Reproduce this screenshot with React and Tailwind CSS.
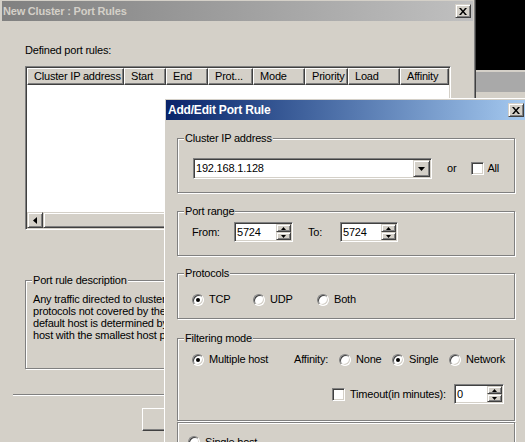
import React from 'react';

const sunken =
  'border border-t-[#808080] border-l-[#808080] border-r-white border-b-white shadow-[inset_1px_1px_0_#404040,inset_-1px_-1px_0_#d4d0c8]';
const raised =
  'border border-t-[#d4d0c8] border-l-[#d4d0c8] border-r-[#404040] border-b-[#404040] shadow-[inset_1px_1px_0_#fff,inset_-1px_-1px_0_#808080]';
const etched = 'border border-[#808080] shadow-[inset_1px_1px_0_#fff,1px_1px_0_#fff]';

const CloseBtn = () => (
  <span className={`w-[16px] h-[14px] bg-[#d4d0c8] flex items-center justify-center ${raised}`}>
    <svg width="8" height="7" viewBox="0 0 8 7">
      <path d="M0 0h2l2 2.5L6 0h2L5 3.5 8 7H6L4 4.5 2 7H0l3-3.5z" fill="#000" />
    </svg>
  </span>
);

const Arrow = ({ dir }) => {
  const d = {
    up: 'M0 3h5L2.5 0z',
    down: 'M0 0h5L2.5 3z',
  }[dir];
  return (
    <svg width="5" height="3" viewBox="0 0 5 3">
      <path d={d} fill="#000" />
    </svg>
  );
};

const Spinner = ({ value, w }) => (
  <div className={`h-[20px] bg-white flex ${sunken} ${w}`}>
    <span className="flex-1 pl-[2px] flex items-center">{value}</span>
    <div className="flex flex-col w-[16px] py-[1px] pr-[1px]">
      <span className={`flex-1 bg-[#d4d0c8] flex items-center justify-center ${raised}`}>
        <Arrow dir="up" />
      </span>
      <span className={`flex-1 bg-[#d4d0c8] flex items-center justify-center ${raised}`}>
        <Arrow dir="down" />
      </span>
    </div>
  </div>
);

const Radio = ({ checked, label, className = '' }) => (
  <div className={`flex items-center gap-[5px] ${className}`}>
    <span className="w-[12px] h-[12px] shrink-0 rounded-full bg-white border border-t-[#808080] border-l-[#808080] border-r-white border-b-white shadow-[inset_1px_1px_0_#404040,inset_-1px_-1px_0_#d4d0c8] flex items-center justify-center">
      {checked && <span className="w-[4px] h-[4px] rounded-full bg-black" />}
    </span>
    <span>{label}</span>
  </div>
);

const Check = () => <span className={`w-[13px] h-[13px] shrink-0 bg-white ${sunken}`} />;

const Group = ({ label, className = '', children }) => (
  <fieldset className={`w-[338px] ${etched} ${className}`}>
    <legend className="ml-[6px] px-[1px] leading-[13px] bg-[#d4d0c8]">{label}</legend>
    {children}
  </fieldset>
);

const columns = [
  ['Cluster IP address', 'w-[97px]'],
  ['Start', 'w-[42px]'],
  ['End', 'w-[42px]'],
  ['Prot...', 'w-[45px]'],
  ['Mode', 'w-[52px]'],
  ['Priority', 'w-[43px]'],
  ['Load', 'w-[52px]'],
  ['Affinity', 'flex-1'],
];

const BackWindow = () => (
  <div className="absolute left-0 top-0 w-[476px] h-[470px] bg-[#d4d0c8] pt-[1px] pl-[2px] border-r border-r-[#404040] shadow-[inset_-1px_0_0_#808080]">
    <div className="h-[20px] mr-[2px] pl-[1px] pr-[2px] flex items-center justify-between bg-linear-to-r from-[#808080] to-[#c0c0c0] text-[#d4d0c8] font-bold text-[11px]">
      <span>New Cluster :  Port Rules</span>
      <CloseBtn />
    </div>

    <div className="pl-[11px]">
      <div className="ml-[12px] mt-[23px] leading-[13px]">Defined port rules:</div>

      <div className={`ml-[12px] mt-[9px] w-[426px] h-[164px] flex flex-col bg-white p-[1px] ${sunken}`}>
        <div className="flex h-[17px] shrink-0 bg-[#d4d0c8]">
          {columns.map(([name, w]) => (
            <div
              key={name}
              className={`${w} h-full pl-[6px] flex items-center whitespace-nowrap overflow-hidden border border-t-white border-l-white border-r-[#404040] border-b-[#404040] shadow-[inset_-1px_-1px_0_#808080]`}
            >
              {name}
            </div>
          ))}
        </div>
        <div className="flex-1 bg-white" />
        <div className="h-[16px] shrink-0 flex bg-[#e9e7e3]">
          <span className={`w-[16px] h-[16px] bg-[#d4d0c8] flex items-center justify-center ${raised}`}>
            <svg width="4" height="7" viewBox="0 0 4 7">
              <path d="M4 0v7L0 3.5z" fill="#000" />
            </svg>
          </span>
          <span className={`flex-1 h-[16px] bg-[#d4d0c8] ${raised}`} />
        </div>
      </div>

      <fieldset className={`ml-[12px] mt-[44px] w-[426px] ${etched} pb-[27px]`}>
        <legend className="ml-[6px] px-[1px] leading-[13px] bg-[#d4d0c8]">Port rule description</legend>
        <div className="pl-[7px] pt-[6px] leading-[12px] whitespace-nowrap">
          <div>Any traffic directed to cluster IP addresses that is not covered by the</div>
          <div>protocols not covered by the port rules is handled by the default host. The</div>
          <div>default host is determined by the host priority settings; it is the</div>
          <div>host with the smallest host priority.</div>
        </div>
      </fieldset>

      <div className="mt-[25px] w-[450px] h-[2px] border-t border-t-[#808080] border-b border-b-white" />

      <div className="mt-[12px] ml-[129px] w-[75px] h-[23px] bg-[#d4d0c8] border border-t-white border-l-white border-r-[#404040] border-b-[#404040] shadow-[inset_-1px_-1px_0_#808080]" />
    </div>
  </div>
);

const FrontDialog = () => (
  <div className="absolute left-[164px] top-[98px] w-[363px] h-[360px] bg-[#d4d0c8] border-t border-l border-white pt-[1px] pl-[1px]">
    <div className="h-[20px] mr-[1px] pl-[2px] pr-[2px] flex items-center justify-between bg-linear-to-r from-[#0a246a] to-[#a6caf0] text-white font-bold text-[12px]">
      <span>Add/Edit Port Rule</span>
      <CloseBtn />
    </div>

    <div className="pl-[11px]">
      <Group label="Cluster IP address" className="mt-[12px]">
        <div className="mt-[13px] pb-[13px] pl-[15px] flex items-center">
          <div className={`w-[239px] h-[21px] bg-white flex items-center ${sunken}`}>
            <span className="flex-1 pl-[2px]">192.168.1.128</span>
            <span className={`w-[17px] h-[17px] mr-[1px] bg-[#d4d0c8] flex items-center justify-center ${raised}`}>
              <svg width="7" height="4" viewBox="0 0 7 4">
                <path d="M0 0h7L3.5 4z" fill="#000" />
              </svg>
            </span>
          </div>
          <span className="ml-[15px]">or</span>
          <span className="ml-[15px] flex items-center">
            <Check />
            <span className="ml-[3px]">All</span>
          </span>
        </div>
      </Group>

      <Group label="Port range" className="mt-[12px]">
        <div className="mt-[4px] pb-[13px] pl-[14px] flex items-center">
          <span className="w-[42px]">From:</span>
          <Spinner value="5724" w="w-[59px]" />
          <span className="ml-[15px] w-[32px]">To:</span>
          <Spinner value="5724" w="w-[58px]" />
        </div>
      </Group>

      <Group label="Protocols" className="mt-[11px]">
        <div className="mt-[13px] pb-[12px] pl-[14px] flex items-center h-[13px] box-content">
          <Radio checked label="TCP" className="w-[61px]" />
          <Radio label="UDP" className="w-[64px]" />
          <Radio label="Both" />
        </div>
      </Group>

      <Group label="Filtering mode" className="mt-[13px]">
        <div className="mt-[8px] pl-[14px] flex items-center h-[13px]">
          <Radio checked label="Multiple host" className="w-[102px]" />
          <span className="w-[45px]">Affinity:</span>
          <Radio label="None" className="w-[53px]" />
          <Radio checked label="Single" className="w-[57px]" />
          <Radio label="Network" />
        </div>
        <div className="mt-[18px] pb-[16px] pl-[154px] flex items-center">
          <Check />
          <span className="ml-[5px] w-[104px] whitespace-nowrap">Timeout(in minutes):</span>
          <Spinner value="0" w="w-[50px]" />
        </div>
      </Group>

      <div className={`mt-[1px] w-[338px] h-[60px] ${etched}`}>
        <Radio label="Single host" className="pt-[11px] pl-[10px]" />
      </div>
    </div>
  </div>
);

export default function App() {
  return (
    <div className="relative w-[525px] h-[442px] overflow-hidden bg-black font-['Liberation_Sans',Arial,sans-serif] text-[11px] tracking-[-0.2px] text-black">
      <div className="absolute left-[476px] top-[70px] w-[80px] h-[120px] bg-[#d4d0c8] pt-[2px]">
        <div className="h-[20px] bg-[#a9a9a9]" />
      </div>
      <BackWindow />
      <FrontDialog />
    </div>
  );
}
